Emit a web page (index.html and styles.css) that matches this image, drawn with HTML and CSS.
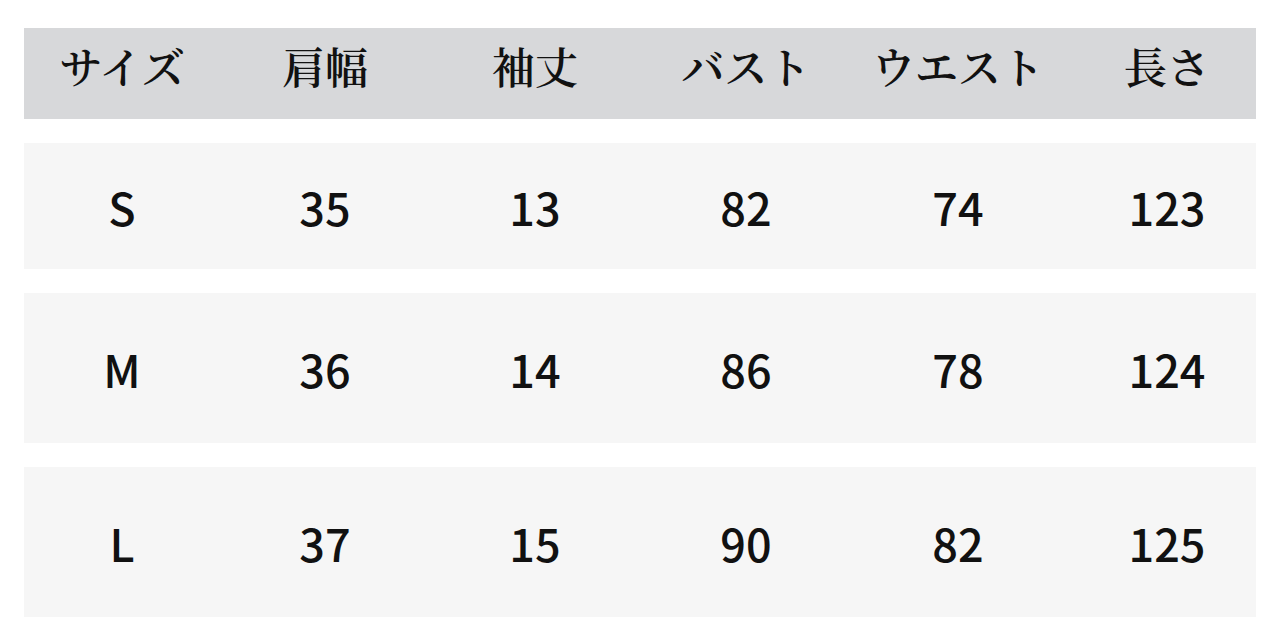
FILE: index.html
```html
<!DOCTYPE html>
<html lang="ja">
<head>
<meta charset="utf-8">
<title>サイズ表</title>
<link rel="stylesheet" href="styles.css">
</head>
<body>
<div class="sheet">
  <div class="row head">
    <div class="cell">サイズ</div>
    <div class="cell">肩幅</div>
    <div class="cell">袖丈</div>
    <div class="cell">バスト</div>
    <div class="cell">ウエスト</div>
    <div class="cell last">長さ</div>
  </div>
  <div class="row data short">
    <div class="cell">S</div>
    <div class="cell">35</div>
    <div class="cell">13</div>
    <div class="cell">82</div>
    <div class="cell">74</div>
    <div class="cell last">123</div>
  </div>
  <div class="row data">
    <div class="cell">M</div>
    <div class="cell">36</div>
    <div class="cell">14</div>
    <div class="cell">86</div>
    <div class="cell">78</div>
    <div class="cell last">124</div>
  </div>
  <div class="row data">
    <div class="cell">L</div>
    <div class="cell">37</div>
    <div class="cell">15</div>
    <div class="cell">90</div>
    <div class="cell">82</div>
    <div class="cell last">125</div>
  </div>
</div>
</body>
</html>
```

FILE: styles.css
```css
html, body {
  margin: 0;
  padding: 0;
  background: #ffffff;
}

.sheet {
  padding: 28px 0 0 24px;
  width: 1232px;
  display: flex;
  flex-direction: column;
  gap: 24px;
}

.row {
  display: grid;
  grid-template-columns: 196px 210px 210px 212px 212px 192px;
  align-items: center;
  color: #111111;
}

.cell {
  text-align: center;
  white-space: nowrap;
}

.cell.last {
  padding-left: 14px;
}

.head {
  height: 91px;
  background: #d7d8da;
  font-family: "Noto Serif CJK JP", "Noto Sans CJK JP", serif;
  font-size: 43px;
  font-weight: 600;
  line-height: 1;
  padding-bottom: 16px;
  box-sizing: border-box;
}

.data {
  height: 150px;
  background: #f6f6f6;
  font-family: "Noto Sans CJK JP", "Noto Sans", sans-serif;
  font-size: 45px;
  font-weight: 500;
  line-height: 1;
}

.data.short {
  height: 126px;
}
```
